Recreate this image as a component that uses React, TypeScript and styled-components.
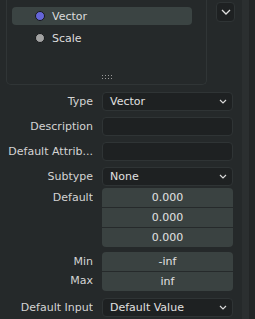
import React from 'react'
import styled, { createGlobalStyle } from 'styled-components'

const Global = createGlobalStyle`
    html, body {
        margin: 0;
        padding: 0;
        background: #25292a;
    }
    body {
        font-family: "DejaVu Sans", sans-serif;
        font-size: 11px;
        color: #d6d6d6;
    }
`

const Page = styled.div`
    display: flex;
    width: 255px;
    height: 319px;
    overflow: hidden;
    background: #25292a;
`

const Main = styled.div`
    width: 236px;
    padding-left: 6px;
    display: flex;
    flex-direction: column;
`

const Strip = styled.div`
    width: 7px;
    background: #2b2f30;
`

const Edge = styled.div`
    flex: 1;
    background: #222526;
`

const TopRow = styled.div`
    display: flex;
    gap: 9px;
`

const ListBox = styled.div`
    width: 180px;
    height: 77px;
    border: 1px solid #303536;
    border-top: none;
    border-radius: 0 0 5px 5px;
    padding: 7px 14px 0 5px;
    display: flex;
    flex-direction: column;
    gap: 4px;
    position: relative;
`

const Item = styled.div<{ $active?: boolean }>`
    height: 18px;
    display: flex;
    align-items: center;
    gap: 7px;
    padding-left: 23px;
    border-radius: 4px;
    background: ${p => (p.$active ? '#3b4443' : 'transparent')};
    color: #dcdcdc;
`

const Dot = styled.span<{ $color: string }>`
    width: 8px;
    height: 8px;
    border-radius: 50%;
    background: ${p => p.$color};
    border: 1px solid #16181a;
`

const Grip = styled.div`
    position: absolute;
    left: 94px;
    top: 74px;
    width: 12px;
    height: 5px;
    background-image: radial-gradient(circle, #9a9a9a 0.6px, transparent 0.8px);
    background-size: 3px 3px;
`

const MenuButton = styled.div`
    margin-top: 2px;
    width: 17px;
    height: 18px;
    border: 1px solid #2f3435;
    border-radius: 4px;
    background: #1e2122;
    display: flex;
    align-items: center;
    justify-content: center;
`

const Form = styled.div`
    display: grid;
    grid-template-columns: 87px 131px;
    column-gap: 9px;
    margin-top: 7px;
`

const Label = styled.div<{ $top?: number }>`
    margin-top: ${p => p.$top ?? 0}px;
    height: 19px;
    line-height: 19px;
    text-align: right;
    white-space: nowrap;
    overflow: hidden;
    color: #d4d4d4;
`

const Stack = styled.div<{ $top?: number }>`
    margin-top: ${p => p.$top ?? 0}px;
    display: flex;
    flex-direction: column;
`

const Field = styled.div<{ $top?: number }>`
    margin-top: ${p => p.$top ?? 0}px;
    height: 17px;
    border: 1px solid #2f3435;
    border-radius: 4px;
    background: #1e2122;
    display: flex;
    align-items: center;
    justify-content: space-between;
    padding: 0 5px 0 7px;
    color: #e0e0e0;
`

const NumGroup = styled.div<{ $top?: number }>`
    margin-top: ${p => p.$top ?? 0}px;
    border-radius: 4px;
    overflow: hidden;
    background: #3a4241;
    display: flex;
    flex-direction: column;
`

const NumCell = styled.div`
    height: 19px;
    line-height: 19px;
    text-align: center;
    color: #e2e2e2;
    & + & {
        border-top: 1px solid #262a2b;
    }
`

const Chevron = () => (
    <svg width="8" height="5" viewBox="0 0 8 5">
        <path d="M1 1 L4 4 L7 1" fill="none" stroke="#d8d8d8" strokeWidth="1.2" />
    </svg>
)

const App = () => {
    return (
        <Page>
            <Global />
            <Main>
                <TopRow>
                    <ListBox>
                        <Item $active><Dot $color="#6565d8" />Vector</Item>
                        <Item><Dot $color="#a2a2a2" />Scale</Item>
                        <Grip />
                    </ListBox>
                    <MenuButton>
                        <svg width="10" height="6" viewBox="0 0 10 6">
                            <path d="M1 1 L5 5 L9 1" fill="none" stroke="#e0e0e0" strokeWidth="1.3" />
                        </svg>
                    </MenuButton>
                </TopRow>
                <Form>
                    <Label>Type</Label>
                    <Field>Vector<Chevron /></Field>

                    <Label $top={6}>Description</Label>
                    <Field $top={6} />

                    <Label $top={6}>Default Attrib...</Label>
                    <Field $top={6} />

                    <Label $top={6}>Subtype</Label>
                    <Field $top={6}>None<Chevron /></Field>

                    <Stack $top={2}>
                        <Label>Default</Label>
                    </Stack>
                    <NumGroup $top={2}>
                        <NumCell>0.000</NumCell>
                        <NumCell>0.000</NumCell>
                        <NumCell>0.000</NumCell>
                    </NumGroup>

                    <Stack $top={5}>
                        <Label>Min</Label>
                        <Label>Max</Label>
                    </Stack>
                    <NumGroup $top={5}>
                        <NumCell>-inf</NumCell>
                        <NumCell>inf</NumCell>
                    </NumGroup>

                    <Label $top={7}>Default Input</Label>
                    <Field $top={7}>Default Value<Chevron /></Field>
                </Form>
            </Main>
            <Strip />
            <Edge />
        </Page>
    )
}

export default App
